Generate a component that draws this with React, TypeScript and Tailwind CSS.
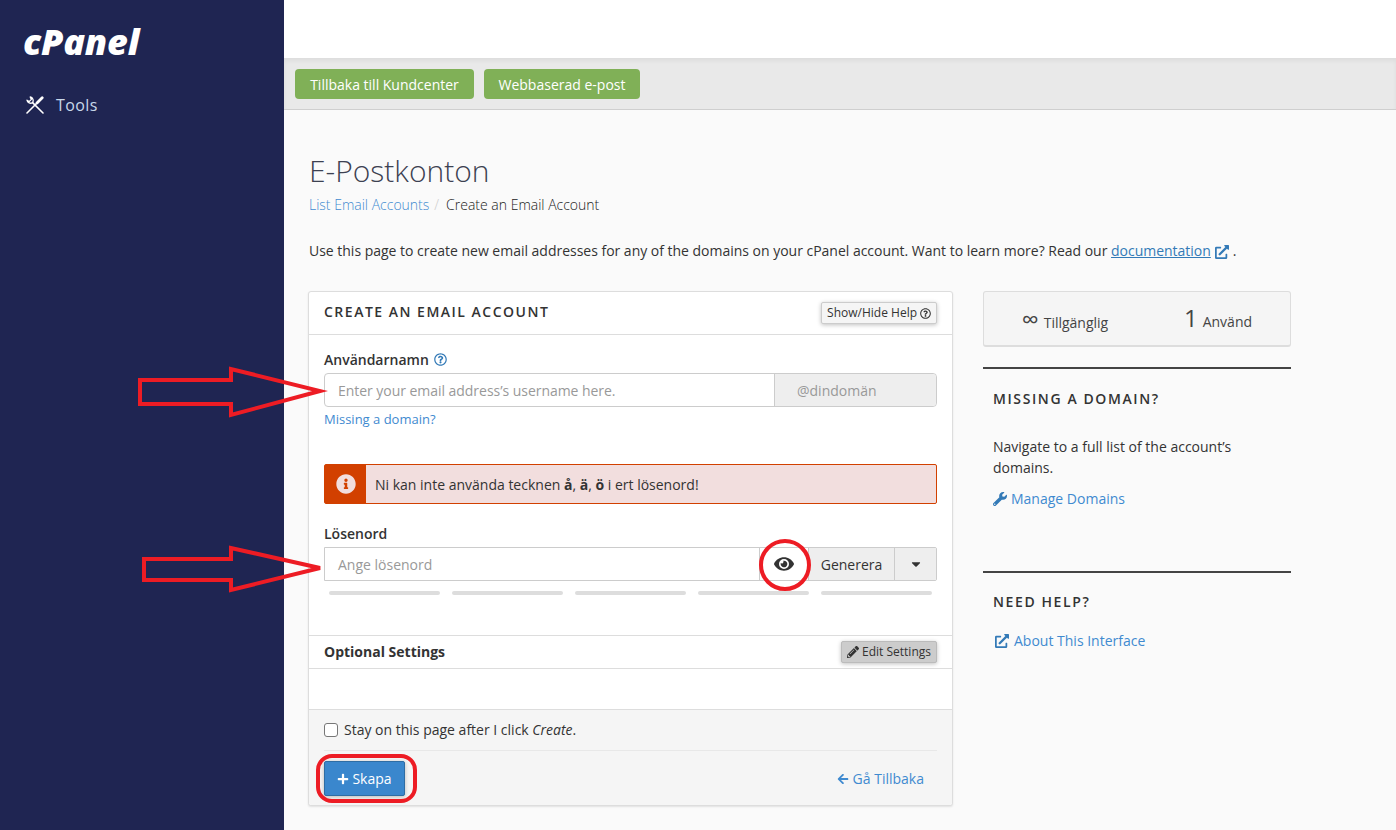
import { FaArrowLeft, FaCaretDown, FaExternalLinkAlt, FaEye, FaInfoCircle, FaPencilAlt, FaPlus, FaRegQuestionCircle, FaWrench } from 'react-icons/fa';

const strengthBars = [0, 1, 2, 3, 4];

function ToolsIcon() {
  return (
    <svg width="18" height="18" viewBox="0 0 18 18" fill="none" stroke="#fff" strokeLinecap="round" strokeLinejoin="round">
      <path d="M1 17 L10.5 7.5" strokeWidth="1.6" />
      <path d="M11 7 L16.2 1.8" strokeWidth="2.8" />
      <path d="M6.6 6.6 L17 17" strokeWidth="1.6" />
      <path d="M4.2 1 A3.6 3.6 0 0 1 6.6 6.6 A3.6 3.6 0 0 1 1 4.2 L3.2 5.6 L5.4 3.4 Z" strokeWidth="1.3" />
    </svg>
  );
}

function Annotations() {
  return (
    <svg className="absolute left-0 top-0 pointer-events-none" width="1396" height="830" fill="none" stroke="#ed1c24" strokeWidth="4">
      <polygon points="140,380 231,380 231,369 320,391 231,415 231,404 140,404" />
      <polygon points="144,559 231,559 231,548 320,568 231,590 231,580 144,580" />
      <ellipse cx="785" cy="565" rx="24" ry="24" />
      <rect x="318" y="756" width="97" height="45" rx="14" />
    </svg>
  );
}

function SideHeading({ children }: { children: string }) {
  return <h3 className="px-[10px] text-[14px] leading-5 font-semibold tracking-[1.6px] text-[#333]">{children}</h3>;
}

export default function App() {
  return (
    <div className="relative flex h-[830px] w-[1396px] overflow-hidden bg-[#fafafa] text-[14px] text-[#333] font-['Open_Sans',sans-serif]">
      {/* Sidebar */}
      <aside className="w-[284px] shrink-0 bg-[#1f2552] text-white">
        <div className="h-[93px] pl-[23px] pt-[20px] text-[36px] leading-[44px] font-extrabold italic tracking-[-0.2px]">cPanel</div>
        <div className="flex items-center gap-[12px] pl-[26px] text-[#c8d8ea]">
          <ToolsIcon />
          <span className="text-[16px] leading-[24px] tracking-[0.4px]">Tools</span>
        </div>
      </aside>

      <main className="flex-1">
        <div className="h-[58px] bg-white" />
        <div className="flex h-[52px] gap-[10px] border-b border-[#cfcfcf] bg-[#e9e9e9] pl-[11px] pt-[11px] shadow-[inset_0_3px_4px_rgba(0,0,0,0.05)]">
          <button className="h-[30px] w-[179px] rounded-[4px] bg-[#80b057] text-[14px] text-white">Tillbaka till Kundcenter</button>
          <button className="h-[30px] w-[156px] rounded-[4px] bg-[#80b057] text-[14px] text-white">Webbaserad e-post</button>
        </div>

        <div className="pl-[24px] pr-[25px]">
          <h1 className="ml-[1px] mt-[41px] text-[30px] leading-[40px] font-light text-[#3c4151]">E-Postkonton</h1>
          <div className="ml-[1px] mt-[4px] flex gap-[5px] leading-[20px] font-light">
            <a className="text-[#3f8ad0]">List Email Accounts</a>
            <span className="text-[#ccc]">/</span>
            <span className="ml-[2px] text-[#222]">Create an Email Account</span>
          </div>
          <p className="ml-[1px] mt-[26px] leading-[20px] tracking-[-0.015px]">
            Use this page to create new email addresses for any of the domains on your cPanel account. Want to learn more? Read our{' '}
            <a className="text-[#337ab7] underline">documentation</a>
            <FaExternalLinkAlt className="mx-[4px] inline h-[14px] w-[14px] text-[#337ab7]" />.
          </p>

          <div className="mt-[30px] flex items-start gap-[30px]">
            {/* Create form */}
            <section className="w-[645px] shrink-0 rounded-[3px] border border-[#ddd] bg-white shadow-[0_1px_2px_rgba(0,0,0,0.1)]">
              <div className="flex h-[43px] items-center justify-between border-b border-[#ddd] pl-[15px] pr-[15px]">
                <h2 className="mb-[3px] text-[14px] font-semibold tracking-[1.5px]">CREATE AN EMAIL ACCOUNT</h2>
                <button className="flex h-[22px] items-center gap-[3px] rounded-[2px] border border-[#ccc] bg-[#f5f5f5] px-[5px] text-[12px] shadow-[0_1px_4px_rgba(0,0,0,0.25)]">
                  Show/Hide Help <FaRegQuestionCircle className="h-[11px] w-[11px]" />
                </button>
              </div>

              <div className="h-[300px] px-[15px] pt-[14px]">
                <label className="flex h-[21px] items-center gap-[5px] font-semibold">
                  Användarnamn <FaRegQuestionCircle className="h-[13px] w-[13px] text-[#337ab7]" />
                </label>
                <div className="mt-[3px] flex h-[34px] rounded-[4px] border border-[#ccc]">
                  <div className="flex flex-1 items-center pl-[13px] tracking-[-0.04px] text-[#999]">Enter your email address’s username here.</div>
                  <div className="flex w-[162px] items-center rounded-r-[4px] border-l border-[#ccc] bg-[#eee] pl-[22px] text-[#999]">@dindomän</div>
                </div>
                <a className="mt-[2px] block h-[20px] text-[13px] leading-[20px] text-[#3f8ad0]">Missing a domain?</a>

                <div className="mt-[35px] flex h-[40px] rounded-[2px] border border-[#d24000] bg-[#f2dede]">
                  <div className="flex w-[41px] items-center justify-center bg-[#d24000]">
                    <FaInfoCircle className="h-[20px] w-[20px] text-[#f2dede]" />
                  </div>
                  <div className="flex items-center pl-[9px]">
                    <span>Ni kan inte använda tecknen <b>å</b>, <b>ä</b>, <b>ö</b> i ert lösenord!</span>
                  </div>
                </div>

                <label className="mt-[19px] block h-[21px] font-semibold leading-[21px]">Lösenord</label>
                <div className="mt-[3px] flex h-[34px] rounded-r-[2px] border border-[#ccc]">
                  <div className="flex flex-1 items-center pl-[13px] text-[#999]">Ange lösenord</div>
                  <div className="flex w-[49px] items-center justify-center border-l border-[#ccc]">
                    <FaEye className="h-[20px] w-[20px] text-[#333]" />
                  </div>
                  <div className="flex w-[86px] items-center justify-center border-l border-[#ccc] bg-[#eee]">Generera</div>
                  <div className="flex w-[42px] items-center justify-center border-l border-[#ccc] bg-[#eee]">
                    <FaCaretDown className="h-[14px] w-[14px]" />
                  </div>
                </div>
                <div className="mt-[10px] flex justify-between px-[5px]">
                  {strengthBars.map(bar => (
                    <div key={bar} className="h-[4px] w-[111px] rounded-[2px] bg-[#ddd]" />
                  ))}
                </div>
              </div>

              <div className="flex h-[34px] items-center justify-between border-y border-[#ddd] px-[15px]">
                <span className="mb-[2px] font-bold">Optional Settings</span>
                <button className="flex h-[22px] items-center gap-[3px] rounded-[2px] border border-[#bbb] bg-[#ccc] px-[5px] text-[12px] shadow-[0_1px_4px_rgba(0,0,0,0.25)]">
                  <FaPencilAlt className="h-[12px] w-[12px]" /> Edit Settings
                </button>
              </div>
              <div className="h-[40px]" />

              <div className="rounded-b-[3px] border-t border-[#ddd] bg-[#f5f5f5] px-[15px]">
                <label className="flex h-[41px] items-center gap-[6px] border-b border-[#e8e8e8] pb-[1px]">
                  <span className="h-[14px] w-[14px] rounded-[3px] border border-[#777] bg-white" />
                  <span>Stay on this page after I click <i>Create</i>.</span>
                </label>
                <div className="flex h-[54px] items-start justify-between pt-[10px]">
                  <button className="flex h-[35px] w-[81px] items-center justify-center gap-[3px] rounded-[2px] border border-[#2e6da4] bg-[#3a87cd] text-white shadow-[0_1px_4px_rgba(0,0,0,0.25)]">
                    <FaPlus className="h-[12px] w-[12px]" /> Skapa
                  </button>
                  <a className="mr-[13px] mt-[7px] flex items-center gap-[4px] text-[#3f8ad0]">
                    <FaArrowLeft className="h-[12px] w-[12px]" /> Gå Tillbaka
                  </a>
                </div>
              </div>
            </section>

            {/* Right column */}
            <aside className="w-[308px] shrink-0">
              <div className="flex h-[56px] items-center rounded-[3px] border border-[#ddd] border-b-2 bg-[#f5f5f5] text-[#444]">
                <div className="flex w-1/2 items-baseline justify-center gap-[5px] pl-[9px] pt-[2px]">
                  <span className="text-[24px] leading-[24px]">∞</span> Tillgänglig
                </div>
                <div className="flex w-1/2 items-baseline justify-center gap-[5px] pl-[9px]">
                  <span className="text-[24px] leading-[24px]">1</span> Använd
                </div>
              </div>

              <div className="mt-[20px] border-t-2 border-[#444] pt-[20px]">
                <SideHeading>MISSING A DOMAIN?</SideHeading>
                <p className="mt-[27px] px-[10px] text-[14px] leading-[21px]">Navigate to a full list of the account’s domains.</p>
                <a className="mt-[10px] flex items-center gap-[4px] px-[10px] text-[#3f8ad0]">
                  <FaWrench className="h-[14px] w-[14px] text-[#337ab7]" /> Manage Domains
                </a>
              </div>

              <div className="mt-[62px] border-t-2 border-[#444] pt-[19px]">
                <SideHeading>NEED HELP?</SideHeading>
                <a className="mt-[18px] flex items-center gap-[5px] pl-[12px] text-[#3f8ad0]">
                  <FaExternalLinkAlt className="h-[14px] w-[14px] text-[#337ab7]" /> About This Interface
                </a>
              </div>
            </aside>
          </div>
        </div>
      </main>

      <Annotations />
    </div>
  );
}
